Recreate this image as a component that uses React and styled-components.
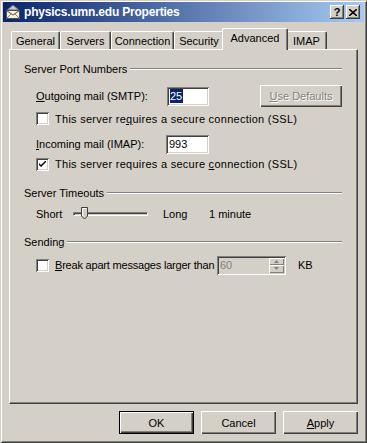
import React from 'react'
import styled, { createGlobalStyle } from 'styled-components'

const Global = createGlobalStyle`
  html, body { margin: 0; padding: 0; background: #d4d0c8; }
  body { font-family: "Liberation Sans", Arial, sans-serif; font-size: 11px; color: #000; }
`

//----------- Window chrome ------------------//
const Window = styled.div`
  box-sizing: border-box;
  width: 367px;
  height: 443px;
  padding: 2px 3px 3px 3px;
  background: #d4d0c8;
  box-shadow: inset 1px 1px #d4d0c8, inset -1px -1px #404040, inset 2px 2px #fff, inset -2px -2px #808080;
  display: flex;
  flex-direction: column;
`

const TitleBar = styled.div`
  height: 20px;
  display: flex;
  align-items: center;
  padding: 0 4px 0 2px;
  background: linear-gradient(90deg, #0a246a, #a6caf0);
  color: #fff;
  font-weight: bold;
  font-size: 12px;
  letter-spacing: -0.2px;
`

const Title = styled.span`
  flex: 1;
  margin-left: 3px;
`

const CaptionButton = styled.div`
  box-sizing: border-box;
  width: 14px;
  height: 14px;
  margin-left: ${p => p.$gap || 0}px;
  background: #d4d0c8;
  box-shadow: inset -1px -1px #404040, inset 1px 1px #fff, inset -2px -2px #808080;
  display: flex;
  align-items: center;
  justify-content: center;
  color: #000;
  font-size: 11px;
  font-weight: bold;
  letter-spacing: 0;
`

const Body = styled.div`
  flex: 1;
  display: flex;
  flex-direction: column;
  padding: 6px 3px 0 6px;
`

//----------- Tabs ------------------//
const TabStrip = styled.div`
  display: flex;
  align-items: flex-end;
  padding-left: 2px;
  height: 21px;
  position: relative;
  z-index: 2;
`

const Tab = styled.div`
  box-sizing: border-box;
  width: ${p => p.$w}px;
  height: ${p => (p.$active ? 22 : 18)}px;
  margin: ${p => (p.$active ? '0 -2px -1px -2px' : '0')};
  padding-top: ${p => (p.$active ? '3px' : '0')};
  background: #d4d0c8;
  border-top: 1px solid #fff;
  border-left: 1px solid #fff;
  border-right: 1px solid #404040;
  box-shadow: inset -1px 0 #808080;
  border-radius: 2px 2px 0 0;
  display: flex;
  justify-content: center;
  align-items: ${p => (p.$active ? 'flex-start' : 'center')};
  position: relative;
  z-index: ${p => (p.$active ? 2 : 1)};
`

const Panel = styled.div`
  box-sizing: border-box;
  width: 349px;
  height: 355px;
  background: #d4d0c8;
  border-top: 1px solid #fff;
  border-left: 1px solid #fff;
  border-right: 1px solid #404040;
  border-bottom: 1px solid #404040;
  box-shadow: inset -1px -1px #808080;
  padding: 12px 15px 0 14px;
`

//----------- Groups ------------------//
const GroupHeader = styled.div`
  display: flex;
  align-items: center;
  height: 14px;
  margin-top: ${p => p.$top || 0}px;
  &::after {
    content: '';
    flex: 1;
    margin-left: 3px;
    height: 0;
    border-top: 1px solid #808080;
    border-bottom: 1px solid #fff;
  }
`

const Row = styled.div`
  display: flex;
  align-items: center;
  height: ${p => p.$h || 20}px;
  margin-top: ${p => p.$top || 0}px;
  padding-left: 12px;
`

const Label = styled.span`
  width: ${p => (p.$w ? `${p.$w}px` : 'auto')};
  margin-left: ${p => p.$left || 0}px;
  letter-spacing: ${p => p.$ls || 0}px;
  flex: none;
  white-space: pre;
`

const U = styled.span`
  text-decoration: underline;
  text-underline-offset: 1px;
`

const TextBox = styled.div`
  box-sizing: border-box;
  width: ${p => p.$w || 42}px;
  height: 19px;
  background: #fff;
  box-shadow: inset 1px 1px #808080, inset -1px -1px #fff, inset 2px 2px #404040, inset -2px -2px #d4d0c8;
  display: flex;
  align-items: center;
  padding-left: 3px;
`

const Selected = styled.span`
  background: #0a246a;
  color: #fff;
  padding: 0 1px 0 0;
  line-height: 14px;
`

const Button = styled.div`
  box-sizing: border-box;
  width: ${p => p.$w || 75}px;
  height: ${p => p.$h || 23}px;
  margin-left: ${p => p.$left || 0}px;
  background: #d4d0c8;
  box-shadow: ${p =>
    p.$default
      ? 'inset 1px 1px #000, inset -1px -1px #000, inset 2px 2px #fff, inset -2px -2px #404040, inset -3px -3px #808080'
      : 'inset 1px 1px #fff, inset -1px -1px #404040, inset -2px -2px #808080'};
  display: flex;
  align-items: center;
  justify-content: center;
  color: ${p => (p.$disabled ? '#808080' : '#000')};
  text-shadow: ${p => (p.$disabled ? '1px 1px #fff' : 'none')};
`

const Check = styled.div`
  box-sizing: border-box;
  width: 13px;
  height: 13px;
  flex: none;
  margin-right: 6px;
  background: #fff;
  box-shadow: inset 1px 1px #808080, inset -1px -1px #fff, inset 2px 2px #404040, inset -2px -2px #d4d0c8;
  display: flex;
  align-items: center;
  justify-content: center;
`

const Spacer = styled.div`
  flex: 1;
`

//----------- Slider ------------------//
const Slider = styled.div`
  position: relative;
  width: 75px;
  height: 20px;
  margin-right: 15px;
  &::before {
    content: '';
    position: absolute;
    left: 0;
    right: 0;
    top: 8px;
    height: 4px;
    border-top: 1px solid #808080;
    border-left: 1px solid #808080;
    border-bottom: 1px solid #fff;
    border-right: 1px solid #fff;
    box-shadow: inset 1px 1px #404040;
    box-sizing: border-box;
  }
`

const Thumb = styled.svg`
  position: absolute;
  left: 8px;
  top: 3px;
`

//----------- Spinner ------------------//
const Spinner = styled.div`
  display: flex;
  box-sizing: border-box;
  width: 69px;
  height: 19px;
  box-shadow: inset 1px 1px #808080, inset -1px -1px #fff, inset 2px 2px #404040, inset -2px -2px #d4d0c8;
  padding: 2px;
`

const SpinText = styled.div`
  flex: 1;
  color: #808080;
  padding-left: 1px;
  display: flex;
  align-items: center;
`

const SpinButtons = styled.div`
  width: 15px;
  display: flex;
  flex-direction: column;
`

const SpinArrow = styled.div`
  flex: 1;
  background: #d4d0c8;
  box-shadow: inset 1px 1px #fff, inset -1px -1px #808080;
  display: flex;
  align-items: center;
  justify-content: center;
`

const ButtonRow = styled.div`
  display: flex;
  justify-content: flex-end;
  padding: 7px 3px 0 0;
`

//----------- Icons ------------------//
const MailIcon = () => (
  <svg width="16" height="16" viewBox="0 0 16 16">
    <path d="M2 6 L8 1 L14 6 Z" fill="#c8c8c8" stroke="#606060" />
    <rect x="1.5" y="6.5" width="13" height="8" fill="#f4f0d8" stroke="#505050" />
    <path d="M1.5 6.5 L8 11 L14.5 6.5" fill="none" stroke="#505050" />
    <path d="M1.5 14.5 L6 10 M14.5 14.5 L10 10" fill="none" stroke="#808080" />
  </svg>
)

const CheckMark = () => (
  <svg width="7" height="7" viewBox="0 0 7 7">
    <path d="M0 2 L0 4 L2 6 L7 1 L7 -1 L2 4 Z" fill="#000" />
  </svg>
)

const Arrow = ({ up }) => (
  <svg width="5" height="3" viewBox="0 0 5 3">
    <path d={up ? 'M2.5 0 L5 3 L0 3 Z' : 'M0 0 L5 0 L2.5 3 Z'} fill="#808080" />
  </svg>
)

const tabs = [
  { name: 'General', w: 49 },
  { name: 'Servers', w: 51 },
  { name: 'Connection', w: 63 },
  { name: 'Security', w: 50 },
  { name: 'Advanced', w: 66, active: true },
  { name: 'IMAP', w: 41 },
]

export default function App() {
  return (
    <>
      <Global />
      <Window>
        <TitleBar>
          <MailIcon />
          <Title>physics.umn.edu Properties</Title>
          <CaptionButton>?</CaptionButton>
          <CaptionButton $gap={2}>
            <svg width="8" height="7" viewBox="0 0 8 7">
              <path d="M0 0 L8 7 M8 0 L0 7" stroke="#000" strokeWidth="1.6" />
            </svg>
          </CaptionButton>
        </TitleBar>
        <Body>
          <TabStrip>
            {tabs.map(t => (
              <Tab key={t.name} $w={t.w} $active={t.active}>{t.name}</Tab>
            ))}
          </TabStrip>
          <Panel>
            <GroupHeader>Server Port Numbers</GroupHeader>
            <Row $h={22} $top={9}>
              <Label $w={131}><U>O</U>utgoing mail (SMTP):</Label>
              <TextBox $w={42}><Selected>25</Selected></TextBox>
              <Spacer />
              <Button $w={82} $h={22} $disabled><U>U</U>se Defaults</Button>
            </Row>
            <Row $h={17} $top={3}>
              <Check />
              <Label $ls={0.27}>This server re<U>q</U>uires a secure connection (SSL)</Label>
            </Row>
            <Row $h={20} $top={7}>
              <Label $w={130}><U>I</U>ncoming mail (IMAP):</Label>
              <TextBox $w={43}>993</TextBox>
            </Row>
            <Row $h={18} $top={1}>
              <Check><CheckMark /></Check>
              <Label $ls={0.27}>This server requires a secure <U>c</U>onnection (SSL)</Label>
            </Row>
            <GroupHeader $top={13}>Server Timeouts</GroupHeader>
            <Row $h={20} $top={4}>
              <Label $w={37}>Short</Label>
              <Slider>
                <Thumb width="7" height="13" viewBox="0 0 7 13">
                  <path d="M0.5 0.5 H6.5 V9 L3.5 12 L0.5 9 Z" fill="#d4d0c8" stroke="#404040" />
                  <path d="M1.5 9 V1.5 H5.5" fill="none" stroke="#fff" />
                </Thumb>
              </Slider>
              <Label $w={46}>Long</Label>
              <Label>1 minute</Label>
            </Row>
            <GroupHeader $top={11}>Sending</GroupHeader>
            <Row $h={20} $top={6}>
              <Check />
              <Label $w={162} $ls={-0.2}><U>B</U>reak apart messages larger than</Label>
              <Spinner>
                <SpinText>60</SpinText>
                <SpinButtons>
                  <SpinArrow><Arrow up /></SpinArrow>
                  <SpinArrow><Arrow /></SpinArrow>
                </SpinButtons>
              </Spinner>
              <Label $left={12}>KB</Label>
            </Row>
          </Panel>
          <ButtonRow>
            <Button $default>OK</Button>
            <Button $left={7}>Cancel</Button>
            <Button $left={7}><U>A</U>pply</Button>
          </ButtonRow>
        </Body>
      </Window>
    </>
  )
}
